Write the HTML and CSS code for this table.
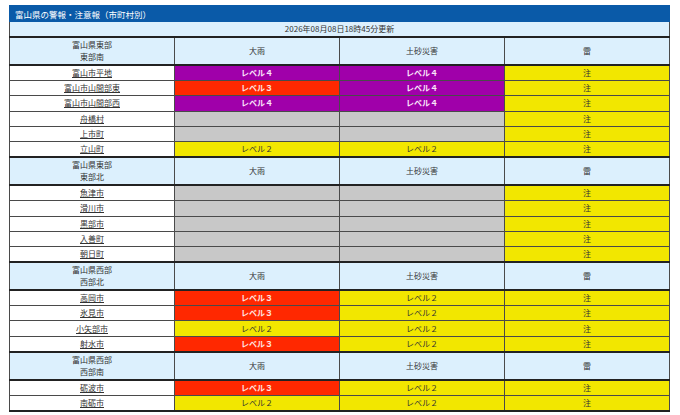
FILE: index.html
```html
<!DOCTYPE html>
<html lang="ja">
<head>
<meta charset="utf-8">
<title>富山県の警報・注意報（市町村別）</title>
<link rel="stylesheet" href="styles.css">
</head>
<body>
<div class="wrap">
<table class="warn">
  <tr class="title"><td colspan="4">富山県の警報・注意報（市町村別）</td></tr>
  <tr class="updated"><td colspan="4">2026年08月08日18時45分更新</td></tr>

  <tr class="sec"><td>富山県東部<br>東部南</td><td>大雨</td><td>土砂災害</td><td>雷</td></tr>
  <tr><td class="area"><a href="#">富山市平地</a></td><td class="lv4">レベル４</td><td class="lv4">レベル４</td><td class="chu">注</td></tr>
  <tr><td class="area"><a href="#">富山市山間部東</a></td><td class="lv3">レベル３</td><td class="lv4">レベル４</td><td class="chu">注</td></tr>
  <tr><td class="area"><a href="#">富山市山間部西</a></td><td class="lv4">レベル４</td><td class="lv4">レベル４</td><td class="chu">注</td></tr>
  <tr><td class="area"><a href="#">舟橋村</a></td><td class="none"></td><td class="none"></td><td class="chu">注</td></tr>
  <tr><td class="area"><a href="#">上市町</a></td><td class="none"></td><td class="none"></td><td class="chu">注</td></tr>
  <tr><td class="area"><a href="#">立山町</a></td><td class="lv2">レベル２</td><td class="lv2">レベル２</td><td class="chu">注</td></tr>

  <tr class="sec"><td>富山県東部<br>東部北</td><td>大雨</td><td>土砂災害</td><td>雷</td></tr>
  <tr><td class="area"><a href="#">魚津市</a></td><td class="none"></td><td class="none"></td><td class="chu">注</td></tr>
  <tr><td class="area"><a href="#">滑川市</a></td><td class="none"></td><td class="none"></td><td class="chu">注</td></tr>
  <tr><td class="area"><a href="#">黒部市</a></td><td class="none"></td><td class="none"></td><td class="chu">注</td></tr>
  <tr><td class="area"><a href="#">入善町</a></td><td class="none"></td><td class="none"></td><td class="chu">注</td></tr>
  <tr><td class="area"><a href="#">朝日町</a></td><td class="none"></td><td class="none"></td><td class="chu">注</td></tr>

  <tr class="sec"><td>富山県西部<br>西部北</td><td>大雨</td><td>土砂災害</td><td>雷</td></tr>
  <tr><td class="area"><a href="#">高岡市</a></td><td class="lv3">レベル３</td><td class="lv2">レベル２</td><td class="chu">注</td></tr>
  <tr><td class="area"><a href="#">氷見市</a></td><td class="lv3">レベル３</td><td class="lv2">レベル２</td><td class="chu">注</td></tr>
  <tr><td class="area"><a href="#">小矢部市</a></td><td class="lv2">レベル２</td><td class="lv2">レベル２</td><td class="chu">注</td></tr>
  <tr><td class="area"><a href="#">射水市</a></td><td class="lv3">レベル３</td><td class="lv2">レベル２</td><td class="chu">注</td></tr>

  <tr class="sec"><td>富山県西部<br>西部南</td><td>大雨</td><td>土砂災害</td><td>雷</td></tr>
  <tr><td class="area"><a href="#">砺波市</a></td><td class="lv3">レベル３</td><td class="lv2">レベル２</td><td class="chu">注</td></tr>
  <tr><td class="area"><a href="#">南砺市</a></td><td class="lv2">レベル２</td><td class="lv2">レベル２</td><td class="chu">注</td></tr>
</table>
</div>
</body>
</html>
```
FILE: styles.css
```css
html, body {
  margin: 0;
  padding: 0;
  background: #ffffff;
}

.wrap {
  padding: 5px 0 0 9px;
}

.warn {
  width: 661px;
  table-layout: fixed;
  border-collapse: collapse;
  font-family: "Noto Sans CJK JP", "Noto Sans", sans-serif;
  font-size: 8px;
  color: #333333;
}

.warn td {
  border: 1px solid #4a4a4a;
  padding: 0;
  text-align: center;
  vertical-align: middle;
  height: 14.2px;
  line-height: 10px;
  overflow: hidden;
  white-space: nowrap;
}

.warn .title td {
  height: 15px;
  background: #0a5aa8;
  color: #ffffff;
  text-align: left;
  padding-left: 5px;
  font-size: 8.5px;
  border-color: #0a5aa8;
}

.warn .updated td {
  height: 14px;
  background: #dcf0fd;
  border-bottom: 2px solid #222222;
}

.warn .sec td {
  height: 26px;
  background: #dcf0fd;
  line-height: 12px;
}

.warn .sec + tr td,
.warn tr + .sec td {
  border-top: 2px solid #222222;
}

.warn tr:last-child td {
  border-bottom: 2px solid #222222;
}

.warn .area {
  background: #ffffff;
}

.warn .area a {
  color: #333333;
  text-decoration: underline;
}

.warn .lv4 {
  background: #a000aa;
  color: #fbe6fb;
  font-weight: bold;
}

.warn .lv3 {
  background: #ff2800;
  color: #ffe6e0;
  font-weight: bold;
}

.warn .lv2 {
  background: #f2e700;
  color: #333333;
}

.warn .chu {
  background: #f2e700;
  color: #333333;
}

.warn .none {
  background: #c8c8c8;
}
```
